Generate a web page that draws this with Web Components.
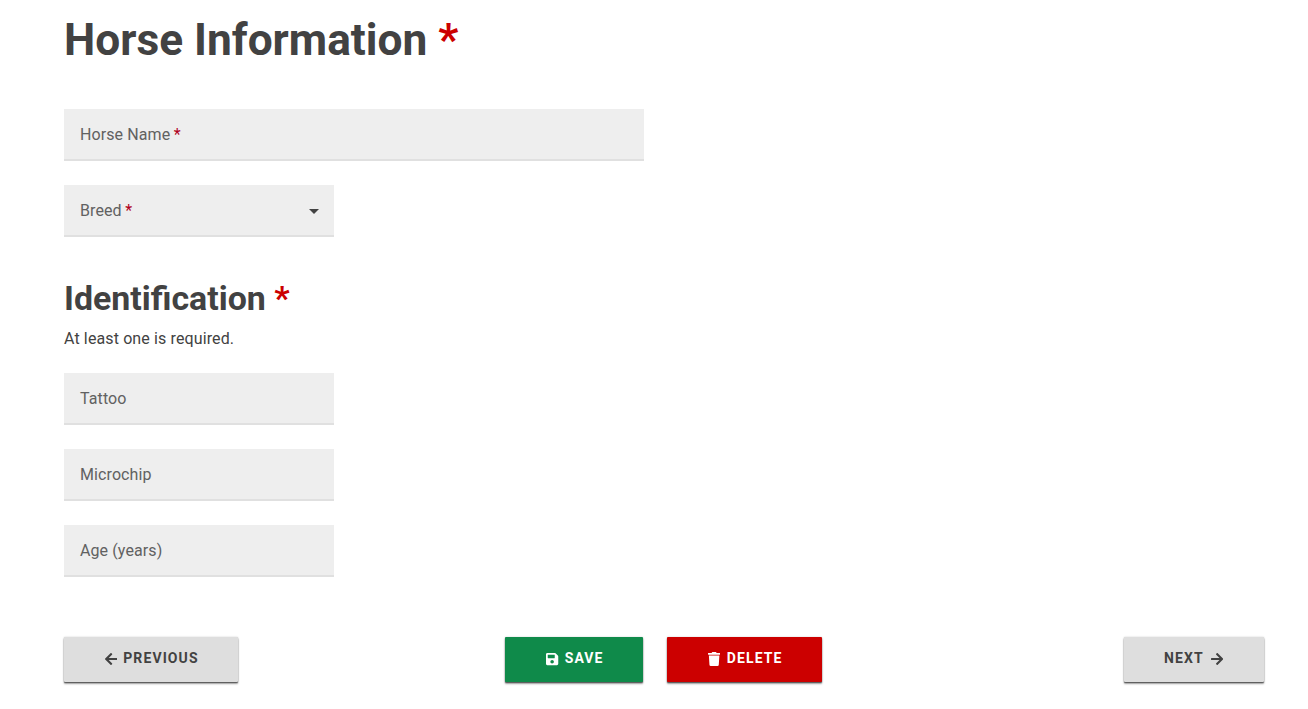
<!DOCTYPE html>
<html>
<head>
<meta charset="utf-8">
<title>Horse Information</title>
<style>
  html, body { background: #fff; }
  body { margin: 0; font-family: Roboto, "Liberation Sans", sans-serif; color: #424242; }
</style>
</head>
<body>
<horse-form></horse-form>

<script>
class RequiredHeading extends HTMLElement {
  constructor() {
    super();
    this.attachShadow({mode: 'open'});
    this.shadowRoot.innerHTML = `
      <style>
        :host { display: block; font-weight: 700; color: #424242; }
        :host([level="1"]) { font-size: 44.25px; line-height: 54px; }
        :host([level="2"]) { font-size: 33.9px; line-height: 40px; }
        span { color: #cc0000; }
      </style>
      <slot></slot> <span>*</span>
    `;
  }
}
customElements.define('required-heading', RequiredHeading);

class TextField extends HTMLElement {
  constructor() {
    super();
    this.attachShadow({mode: 'open'});
    const w = this.getAttribute('required') !== null ? '<b>*</b>' : '';
    const arrow = this.getAttribute('select') !== null ? '<i></i>' : '';
    this.shadowRoot.innerHTML = `
      <style>
        :host {
          display: flex;
          align-items: center;
          box-sizing: border-box;
          width: 270px;
          height: 52px;
          padding: 0 16px;
          background: #eeeeee;
          border-bottom: 2px solid #e0e0e0;
          font-size: 16px;
          letter-spacing: 0.1px;
          color: #616161;
        }
        :host([wide]) { width: 580px; }
        label { flex: 1; }
        b { font-weight: 400; color: #b00020; margin-left: 3.5px; }
        i {
          width: 0; height: 0;
          margin: 2px -1px 0 0;
          border-left: 5px solid transparent;
          border-right: 5px solid transparent;
          border-top: 5px solid #424242;
        }
      </style>
      <label><slot></slot>${w}</label>${arrow}
    `;
  }
}
customElements.define('text-field', TextField);

class ActionButton extends HTMLElement {
  constructor() {
    super();
    this.attachShadow({mode: 'open'});
    this.shadowRoot.innerHTML = `
      <style>
        :host {
          display: inline-flex;
          align-items: center;
          justify-content: center;
          gap: 7px;
          box-sizing: border-box;
          height: 45px;
          padding: 0 39px 0 40px;
          background: var(--btn-bg, #dedede);
          color: var(--btn-fg, #424242);
          border-radius: 1px;
          box-shadow: 0 1px 1px rgba(0,0,0,.45), 0 2px 2px rgba(0,0,0,.35), 0 0 2px rgba(0,0,0,.2);
          font-size: 14px;
          font-weight: 700;
          letter-spacing: 1.1px;
          text-transform: uppercase;
        }
        .label { margin-bottom: 3px; }
        ::slotted(svg) { width: 12.25px; height: 14px; fill: currentColor; display: block; margin-bottom: 1px; }
      </style>
      <slot name="start"></slot><span class="label"><slot></slot></span><slot name="end"></slot>
    `;
  }
}
customElements.define('action-button', ActionButton);

class HorseForm extends HTMLElement {
  constructor() {
    super();
    this.attachShadow({mode: 'open'});
    this.shadowRoot.innerHTML = `
      <style>
        :host { display: block; min-height: 709px; box-sizing: border-box; padding: 13px 44px 0 64px; }
        .name { margin-top: 42px; }
        .breed { margin-top: 24px; }
        required-heading[level="2"] { margin-top: 42px; }
        p { margin: 8px 0 0; font-size: 16px; line-height: 24px; letter-spacing: 0.12px; color: #424242; }
        .id { display: grid; gap: 24px; margin-top: 22px; }
        .actions { display: grid; grid-template-columns: 1fr auto 1fr; margin-top: 60px; }
        .prev { justify-self: start; padding: 0 39px 0 41px; gap: 6px; }
        .next { justify-self: end; padding: 0 41px 0 40px; }
        .mid { display: flex; gap: 24px; margin-right: 1px; }
        .save { --btn-bg: #0f8a4a; --btn-fg: #fff; padding: 0 39px 0 41px; gap: 6px; }
        .del { --btn-bg: #cc0000; --btn-fg: #fff; padding: 0 39px 0 41px; }
      </style>
      <required-heading level="1">Horse Information</required-heading>
      <text-field class="name" wide required>Horse Name</text-field>
      <text-field class="breed" select required>Breed</text-field>
      <required-heading level="2">Identification</required-heading>
      <p>At least one is required.</p>
      <div class="id">
        <text-field>Tattoo</text-field>
        <text-field>Microchip</text-field>
        <text-field>Age (years)</text-field>
      </div>
      <div class="actions">
        <action-button class="prev">
          <svg slot="start" viewBox="0 0 448 512"><path d="M257.5 445.1l-22.2 22.2c-9.4 9.4-24.6 9.4-33.9 0L7 273c-9.4-9.4-9.4-24.6 0-33.9L201.4 44.7c9.4-9.4 24.6-9.4 33.9 0l22.2 22.2c9.5 9.5 9.3 25-.4 34.3L136.6 216H424c13.3 0 24 10.7 24 24v32c0 13.3-10.7 24-24 24H136.6l120.5 114.8c9.8 9.3 10 24.8.4 34.3z"/></svg>
          Previous
        </action-button>
        <div class="mid">
          <action-button class="save">
            <svg slot="start" viewBox="0 0 448 512"><path d="M433.941 129.941l-83.882-83.882A48 48 0 0 0 316.118 32H48C21.49 32 0 53.49 0 80v352c0 26.51 21.49 48 48 48h352c26.51 0 48-21.49 48-48V163.882a48 48 0 0 0-14.059-33.941zM224 416c-35.346 0-64-28.654-64-64 0-35.346 28.654-64 64-64s64 28.654 64 64c0 35.346-28.654 64-64 64zm96-304.52V212c0 6.627-5.373 12-12 12H76c-6.627 0-12-5.373-12-12V108c0-6.627 5.373-12 12-12h228.52c3.183 0 6.235 1.264 8.485 3.515l3.48 3.48A11.996 11.996 0 0 1 320 111.48z"/></svg>
            Save
          </action-button>
          <action-button class="del">
            <svg slot="start" viewBox="0 0 448 512"><path d="M432 32H312l-9.4-18.7A24 24 0 0 0 281.1 0H166.8a23.72 23.72 0 0 0-21.4 13.3L136 32H16A16 16 0 0 0 0 48v32a16 16 0 0 0 16 16h416a16 16 0 0 0 16-16V48a16 16 0 0 0-16-16zM53.2 467a48 48 0 0 0 47.9 45h245.8a48 48 0 0 0 47.9-45L416 128H32z"/></svg>
            Delete
          </action-button>
        </div>
        <action-button class="next">
          Next
          <svg slot="end" viewBox="0 0 448 512"><path d="M190.5 66.9l22.2-22.2c9.4-9.4 24.6-9.4 33.9 0L441 239c9.4 9.4 9.4 24.6 0 33.9L246.6 467.3c-9.4 9.4-24.6 9.4-33.9 0l-22.2-22.2c-9.5-9.5-9.3-25 .4-34.3L311.4 296H24c-13.3 0-24-10.7-24-24v-32c0-13.3 10.7-24 24-24h287.4L190.9 101.2c-9.8-9.3-10-24.8-.4-34.3z"/></svg>
        </action-button>
      </div>
    `;
  }
}
customElements.define('horse-form', HorseForm);
</script>
</body>
</html>
